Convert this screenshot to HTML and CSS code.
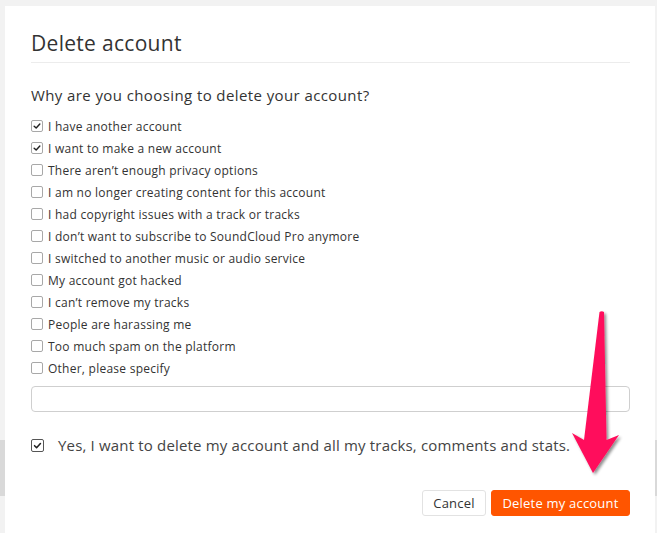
FILE: index.html
```html
<!DOCTYPE html>
<html>
<head>
<meta charset="utf-8">
<link rel="stylesheet" href="styles.css">
</head>
<body>
<div class="dialog">
  <h1 class="title">Delete account</h1>
  <h2 class="question">Why are you choosing to delete your account?</h2>
  <ul class="reasons">
    <li class="reason"><span class="box checked"><svg viewBox="0 0 12 12"><path d="M2.6 6.2 L5 8.5 L9.4 3.6"/></svg></span>I have another account</li>
    <li class="reason"><span class="box checked"><svg viewBox="0 0 12 12"><path d="M2.6 6.2 L5 8.5 L9.4 3.6"/></svg></span>I want to make a new account</li>
    <li class="reason"><span class="box"></span>There aren’t enough privacy options</li>
    <li class="reason"><span class="box"></span>I am no longer creating content for this account</li>
    <li class="reason"><span class="box"></span>I had copyright issues with a track or tracks</li>
    <li class="reason"><span class="box"></span>I don’t want to subscribe to SoundCloud Pro anymore</li>
    <li class="reason"><span class="box"></span>I switched to another music or audio service</li>
    <li class="reason"><span class="box"></span>My account got hacked</li>
    <li class="reason"><span class="box"></span>I can’t remove my tracks</li>
    <li class="reason"><span class="box"></span>People are harassing me</li>
    <li class="reason"><span class="box"></span>Too much spam on the platform</li>
    <li class="reason"><span class="box"></span>Other, please specify</li>
  </ul>
  <div class="other-input"></div>
  <div class="confirm"><span class="box confirm-box checked"><svg viewBox="0 0 12 12"><path d="M2.8 6.2 L5 8.4 L9.2 3.8"/></svg></span>Yes, I want to delete my account and all my tracks, comments and stats.</div>
  <div class="actions">
    <button class="btn cancel">Cancel</button>
    <button class="btn delete">Delete my account</button>
  </div>
  <svg class="arrow" width="80" height="200" viewBox="0 0 80 200">
    <defs>
      <filter id="sh" x="-50%" y="-20%" width="200%" height="140%">
        <feGaussianBlur in="SourceAlpha" stdDeviation="1.6"/>
        <feOffset dx="2" dy="2" result="b"/>
        <feComponentTransfer><feFuncA type="linear" slope="0.45"/></feComponentTransfer>
        <feMerge><feMergeNode/><feMergeNode in="SourceGraphic"/></feMerge>
      </filter>
    </defs>
    <path filter="url(#sh)" fill="#ff0f5b" d="M39.5 12 Q41.8 10.6 44 12 L46.5 140 L59 135 L33 173 L12 133 L24 140 Z"/>
  </svg>
</div>
</body>
</html>
```
FILE: styles.css
```css
html, body {
  margin: 0;
  padding: 0;
}
body {
  width: 657px;
  height: 533px;
  overflow: hidden;
  background: linear-gradient(to bottom, transparent 440px, #d9d9d9 440px, #d9d9d9 496px, transparent 496px), #f2f2f2;
  font-family: "Open Sans", "Liberation Sans", sans-serif;
  color: #333;
}
.dialog {
  position: relative;
  margin: 6px 2px 0 5px;
  height: 527px;
  background: #fff;
  padding: 24px 25px 0 26px;
  box-sizing: border-box;
}
.title {
  margin: 0;
  font-size: 21px;
  line-height: 26px;
  font-weight: 400;
  letter-spacing: 0.3px;
  padding-bottom: 6px;
  border-bottom: 1px solid #ececec;
  color: #333;
}
.question {
  margin: 22px 0 10px;
  font-size: 15px;
  line-height: 20px;
  font-weight: 400;
  letter-spacing: 0.4px;
  color: #333;
}
.reasons {
  list-style: none;
  margin: 0;
  padding: 0;
}
.reason {
  display: flex;
  align-items: center;
  height: 22px;
  font-size: 12px;
  letter-spacing: 0.25px;
  color: #333;
}
.box {
  width: 10px;
  height: 10px;
  border: 1px solid #a8a8a8;
  border-radius: 2px;
  background: #fff;
  margin-right: 5px;
  flex: none;
  display: flex;
  align-items: center;
  justify-content: center;
}
.box svg {
  width: 10px;
  height: 10px;
}
.box svg path {
  fill: none;
  stroke: #222;
  stroke-width: 1.7;
  stroke-linecap: round;
  stroke-linejoin: round;
}
.other-input {
  margin-top: 7px;
  height: 24px;
  border: 1px solid #cfcfcf;
  border-radius: 4px;
}
.confirm {
  display: flex;
  align-items: center;
  margin-top: 23px;
  height: 20px;
  font-size: 15px;
  letter-spacing: 0.17px;
  color: #444;
}
.confirm-box {
  width: 11px;
  height: 11px;
  border-color: #555;
  margin-right: 14px;
}
.confirm-box svg {
  width: 11px;
  height: 11px;
}
.actions {
  display: flex;
  justify-content: flex-end;
  gap: 5px;
  margin-top: 35px;
}
.btn {
  height: 26px;
  border-radius: 3px;
  font-family: "Open Sans", "Liberation Sans", sans-serif;
  font-size: 13px;
  letter-spacing: 0.2px;
  padding: 0 10px;
  cursor: pointer;
}
.cancel {
  background: #fff;
  border: 1px solid #e2e2e2;
  color: #333;
  width: 64px;
}
.delete {
  background: #f50;
  border: 1px solid #f50;
  color: #fff;
  width: 139px;
}
.arrow {
  position: absolute;
  left: 555px;
  top: 294px;
  overflow: visible;
}
```
